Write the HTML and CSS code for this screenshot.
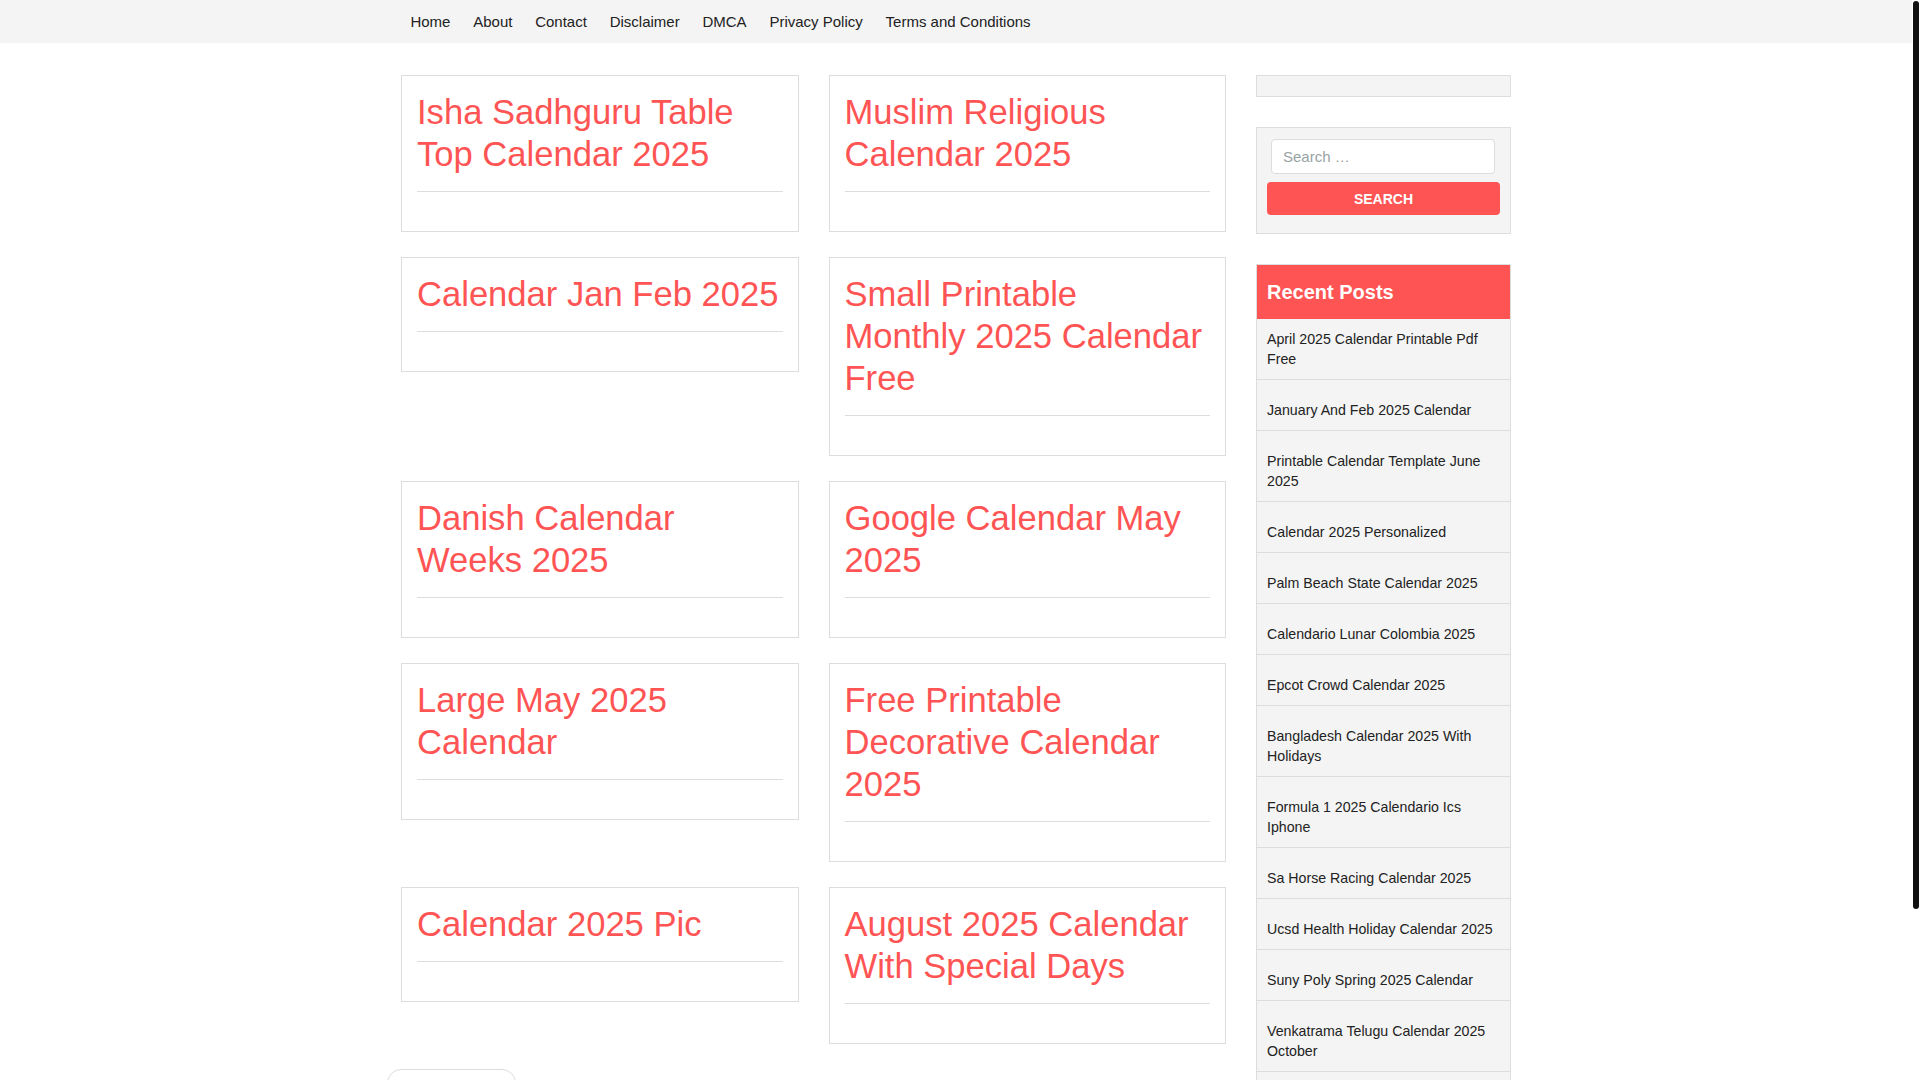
FILE: index.html
```html
<!DOCTYPE html>
<html lang="en">

<head>
    <meta charset="UTF-8">
    <meta name="viewport" content="width=device-width, initial-scale=1.0">
    <title>Calendar 2025</title>
    <link rel="stylesheet" href="styles.css">
</head>

<body>
    <nav class="top-nav">
        <div class="wrap">
            <ul class="menu">
                <li><a href="#">Home</a></li>
                <li><a href="#">About</a></li>
                <li><a href="#">Contact</a></li>
                <li><a href="#">Disclaimer</a></li>
                <li><a href="#">DMCA</a></li>
                <li><a href="#">Privacy Policy</a></li>
                <li><a href="#">Terms and Conditions</a></li>
            </ul>
        </div>
    </nav>

    <div class="site-content">
        <main class="content-area">
            <div class="post-grid">
                <article class="post-card">
                    <header class="entry-header">
                        <h2 class="entry-title"><a href="#">Isha Sadhguru Table Top Calendar 2025</a></h2>
                    </header>
                    <div class="entry-meta"></div>
                </article>
                <article class="post-card">
                    <header class="entry-header">
                        <h2 class="entry-title"><a href="#">Muslim Religious Calendar 2025</a></h2>
                    </header>
                    <div class="entry-meta"></div>
                </article>
                <article class="post-card">
                    <header class="entry-header">
                        <h2 class="entry-title"><a href="#">Calendar Jan Feb 2025</a></h2>
                    </header>
                    <div class="entry-meta"></div>
                </article>
                <article class="post-card">
                    <header class="entry-header">
                        <h2 class="entry-title"><a href="#">Small Printable Monthly 2025 Calendar Free</a></h2>
                    </header>
                    <div class="entry-meta"></div>
                </article>
                <article class="post-card">
                    <header class="entry-header">
                        <h2 class="entry-title"><a href="#">Danish Calendar Weeks 2025</a></h2>
                    </header>
                    <div class="entry-meta"></div>
                </article>
                <article class="post-card">
                    <header class="entry-header">
                        <h2 class="entry-title"><a href="#">Google Calendar May 2025</a></h2>
                    </header>
                    <div class="entry-meta"></div>
                </article>
                <article class="post-card">
                    <header class="entry-header">
                        <h2 class="entry-title"><a href="#">Large May 2025 Calendar</a></h2>
                    </header>
                    <div class="entry-meta"></div>
                </article>
                <article class="post-card">
                    <header class="entry-header">
                        <h2 class="entry-title"><a href="#">Free Printable Decorative Calendar 2025</a></h2>
                    </header>
                    <div class="entry-meta"></div>
                </article>
                <article class="post-card">
                    <header class="entry-header">
                        <h2 class="entry-title"><a href="#">Calendar 2025 Pic</a></h2>
                    </header>
                    <div class="entry-meta"></div>
                </article>
                <article class="post-card">
                    <header class="entry-header">
                        <h2 class="entry-title"><a href="#">August 2025 Calendar With Special Days</a></h2>
                    </header>
                    <div class="entry-meta"></div>
                </article>
            </div>

            <div class="pagination">
                <a href="#">Older posts</a>
            </div>
        </main>

        <aside class="sidebar">
            <section class="widget widget-empty"></section>

            <section class="widget widget-search">
                <form class="search-form">
                    <input type="search" class="search-field" placeholder="Search …">
                    <button type="submit" class="search-submit">Search</button>
                </form>
            </section>

            <section class="widget widget-recent">
                <h2 class="widget-title">Recent Posts</h2>
                <ul>
                    <li><a href="#">April 2025 Calendar Printable Pdf Free</a></li>
                    <li><a href="#">January And Feb 2025 Calendar</a></li>
                    <li><a href="#">Printable Calendar Template June 2025</a></li>
                    <li><a href="#">Calendar 2025 Personalized</a></li>
                    <li><a href="#">Palm Beach State Calendar 2025</a></li>
                    <li><a href="#">Calendario Lunar Colombia 2025</a></li>
                    <li><a href="#">Epcot Crowd Calendar 2025</a></li>
                    <li><a href="#">Bangladesh Calendar 2025 With Holidays</a></li>
                    <li><a href="#">Formula 1 2025 Calendario Ics Iphone</a></li>
                    <li><a href="#">Sa Horse Racing Calendar 2025</a></li>
                    <li><a href="#">Ucsd Health Holiday Calendar 2025</a></li>
                    <li><a href="#">Suny Poly Spring 2025 Calendar</a></li>
                    <li><a href="#">Venkatrama Telugu Calendar 2025 October</a></li>
                    <li><a href="#">Ohio State Calendar 2025</a></li>
                    <li><a href="#">Nyc School Calendar 2025</a></li>
                </ul>
            </section>
        </aside>
    </div>

    <footer class="site-footer">
        <div class="wrap">Copyright © 2025 Calendar 2025</div>
    </footer>

    <!-- page scrollbar thumb -->
    <div class="scroll-thumb"></div>
</body>

</html>
```

FILE: styles.css
```css
body {
    font-family: "Liberation Sans", Arial, sans-serif;
    font-size: 14px;
    line-height: 20px;
    margin: 0 8px 0 0;
    padding: 0;
    color: #222;
    background-color: #fff;
}

a {
    color: inherit;
    text-decoration: none;
}

.wrap {
    width: 1110px;
    margin: 0 auto;
}

.scroll-thumb {
    position: fixed;
    top: 1px;
    right: 1px;
    width: 6px;
    height: 908px;
    background-color: #111;
    border-radius: 3px;
}

/* top menu */
.top-nav {
    background-color: #f4f4f4;
    height: 43px;
}

.menu {
    display: flex;
    list-style: none;
    margin: 0 0 0 -2px;
    padding: 0;
}

.menu a {
    display: block;
    padding: 0 11.4px;
    font-size: 15px;
    line-height: 43px;
    color: #222;
}

/* layout */
.site-content {
    width: 1110px;
    margin: 32px auto 0;
    display: grid;
    grid-template-columns: 825px 255px;
    gap: 30px;
    align-items: start;
}

.post-grid {
    display: grid;
    grid-template-columns: 1fr 1fr;
    column-gap: 30px;
    row-gap: 25px;
    align-items: start;
}

.post-card {
    background: #fff;
    border: 1px solid #ddd;
    padding: 15px;
}

.entry-header {
    padding-bottom: 16px;
    border-bottom: 1px solid #ddd;
}

.entry-title {
    margin: 0;
    max-width: 362.5px;
    font-size: 34.6px;
    line-height: 42px;
    font-weight: normal;
    color: #ff5454;
}

.entry-meta {
    height: 24px;
}

.pagination {
    width: 129px;
    margin: 25px 0 0 -14px;
    padding: 16px 0;
    border: 1px solid #ddd;
    border-radius: 14px;
    box-sizing: border-box;
    text-align: center;
    font-size: 14px;
}

/* sidebar */
.widget {
    background-color: #f4f4f4;
    border: 1px solid #ddd;
    padding: 10px;
    margin-bottom: 30px;
}

.search-form {
    display: flex;
    flex-direction: column;
}

.search-field {
    box-sizing: border-box;
    width: 224px;
    height: 35px;
    margin: 1px 0 8px 4px;
    padding: 0 11px;
    font-family: inherit;
    font-size: 15px;
    color: #222;
    background: #fff;
    border: 1px solid #ddd;
    border-radius: 4px;
}

.search-field::placeholder {
    color: #98a3a5;
}

.search-field:focus {
    outline: none;
}

.search-submit {
    height: 33px;
    margin-bottom: 8px;
    font-family: inherit;
    font-size: 14px;
    font-weight: bold;
    text-transform: uppercase;
    color: #fff;
    background-color: #ff5454;
    border: none;
    border-radius: 4px;
    cursor: pointer;
}

.widget-recent {
    padding: 0;
}

.widget-title {
    margin: 0;
    padding: 16px 10px;
    font-size: 20px;
    line-height: 22px;
    color: #fff;
    background-color: #ff5454;
}

.widget-recent ul {
    list-style: none;
    margin: 0;
    padding: 0;
}

.widget-recent li {
    padding: 20px 10px 10px;
    border-bottom: 1px solid #ddd;
    font-size: 14.2px;
}

.widget-recent li:first-child {
    padding-top: 10px;
}

.widget-recent li:last-child {
    border-bottom: none;
}

.site-footer {
    margin-top: 10px;
    padding: 25px 0;
    background-color: #f4f4f4;
    text-align: center;
}
```
